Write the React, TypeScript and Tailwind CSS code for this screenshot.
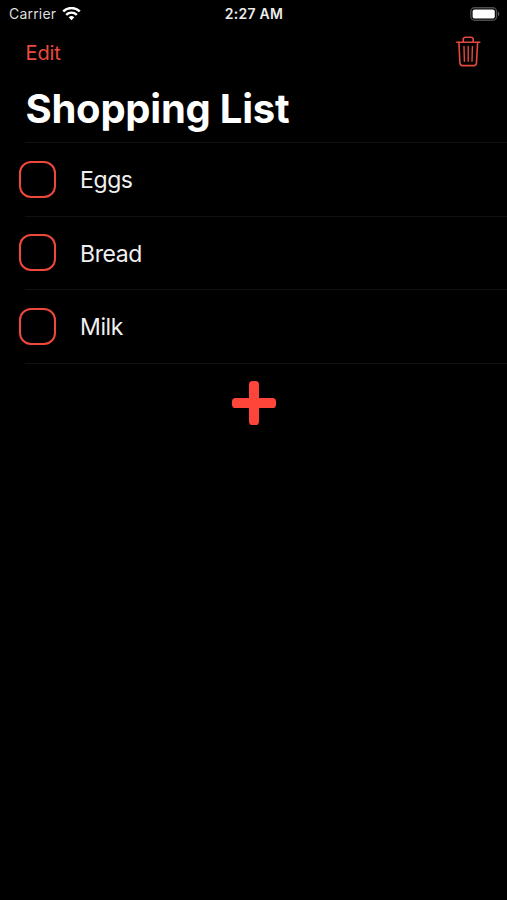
import React, { useState } from "react";

interface ListItem {
  id: string;
  name: string;
}

const initialItems: ListItem[] = [
  { id: "eggs", name: "Eggs" },
  { id: "bread", name: "Bread" },
  { id: "milk", name: "Milk" },
];

export default function App() {
  const [items, setItems] = useState<ListItem[]>(initialItems);
  const [checked, setChecked] = useState<string[]>([]);

  const toggleItem = (id: string) => {
    setChecked((prev) =>
      prev.includes(id) ? prev.filter((c) => c !== id) : [...prev, id]
    );
  };

  const removeChecked = () => {
    setItems((prev) => prev.filter((item) => !checked.includes(item.id)));
    setChecked([]);
  };

  return (
    <div className="flex h-screen min-h-[900px] w-full flex-col bg-black font-['Inter','Liberation_Sans',sans-serif] text-white">
      <StatusBar />

      <header className="flex h-[115px] shrink-0 flex-col pl-[25.5px] pr-[26px]">
        <div className="flex h-[49px] items-center justify-between">
          <button className="pt-[2px] text-[20px] leading-6 tracking-[-0.1px] text-[#ea4a3f]">
            Edit
          </button>
          <button onClick={removeChecked} aria-label="Delete checked items">
            <TrashIcon />
          </button>
        </div>
        <h1 className="mt-[9px] text-[40px] font-bold leading-[48px] tracking-[-0.25px]">
          Shopping List
        </h1>
      </header>

      <main>
        <ul className="ml-[25px] border-t border-[#101010]">
          {items.map((item) => (
            <ListRow
              key={item.id}
              item={item}
              isChecked={checked.includes(item.id)}
              onToggle={() => toggleItem(item.id)}
            />
          ))}
        </ul>

        <div className="flex justify-center pt-4">
          <button aria-label="Add item">
            <PlusIcon />
          </button>
        </div>
      </main>
    </div>
  );
}

function StatusBar() {
  return (
    <div className="grid h-[27px] shrink-0 grid-cols-3 items-center pl-[9px] pr-[7px] text-[14px] leading-4">
      <div className="flex items-center gap-[5.5px]">
        <span className="tracking-[0.2px] text-[#dedede]">Carrier</span>
        <WifiIcon />
      </div>
      <span className="pr-px text-center font-semibold tracking-[0.25px] text-[#ececec]">
        2:27 AM
      </span>
      <div className="flex justify-end">
        <BatteryIcon />
      </div>
    </div>
  );
}

interface ListRowProps {
  item: ListItem;
  isChecked: boolean;
  onToggle: () => void;
}

function ListRow({ item, isChecked, onToggle }: ListRowProps) {
  return (
    <li className="flex h-[73.6px] items-center gap-6 border-b border-[#101010]">
      <button
        onClick={onToggle}
        aria-label={item.name}
        className={`-ml-[6px] h-[37px] w-[37px] rounded-[12px] border-2 border-[#ee473c] ${
          isChecked ? "bg-[#ee473c]" : "bg-transparent"
        }`}
      />
      <span className="pt-[2px] text-[23px] leading-7 tracking-[-0.4px] text-[#f0f0f0]">
        {item.name}
      </span>
    </li>
  );
}

function WifiIcon() {
  return (
    <svg width="19" height="14" viewBox="0 0 19 14" fill="none">
      <path d="M1.2 4.4a12 12 0 0 1 16.6 0" stroke="white" strokeWidth="2.5" />
      <path d="M4.2 7.8a7.6 7.6 0 0 1 10.6 0" stroke="white" strokeWidth="2.4" />
      <path d="M6.7 10.3a4.1 4.1 0 0 1 5.6 0L9.5 13.2z" fill="white" />
    </svg>
  );
}

function BatteryIcon() {
  return (
    <svg width="30" height="14" viewBox="0 0 30 14" fill="none">
      <rect x="0.8" y="0.8" width="25.8" height="12.4" rx="3.8" stroke="#4d4d4d" strokeWidth="1.4" />
      <rect x="2.6" y="2.4" width="22.2" height="9.2" rx="2.2" fill="white" />
      <path d="M28 4.8c1.7.6 1.7 3.8 0 4.4z" fill="#5e5e5e" />
    </svg>
  );
}

function TrashIcon() {
  return (
    <svg
      width="26"
      height="31"
      viewBox="0 0 26 31"
      fill="none"
      stroke="#e5483f"
      strokeWidth="1.6"
      strokeLinecap="round"
      strokeLinejoin="round"
    >
      <path d="M1.8 6.2h23" />
      <path d="M8.2 6V3.4a2.2 2.2 0 0 1 2.2-2.2h5.6a2.2 2.2 0 0 1 2.2 2.2V6" />
      <path d="M3.9 6.4l1 20.4a2.8 2.8 0 0 0 2.8 2.8h11a2.8 2.8 0 0 0 2.8-2.8L22.6 6.4" />
      <path d="M9 10.4l.4 14.8M13.2 10.4v14.8M17.4 10.4l-.4 14.8" strokeWidth="1.4" />
    </svg>
  );
}

function PlusIcon() {
  return (
    <svg width="44" height="46" viewBox="0 0 44 46" fill="#ff453a">
      <rect x="0" y="18" width="44" height="10" rx="3.6" />
      <rect x="17" y="1" width="10" height="44" rx="3.6" />
    </svg>
  );
}
